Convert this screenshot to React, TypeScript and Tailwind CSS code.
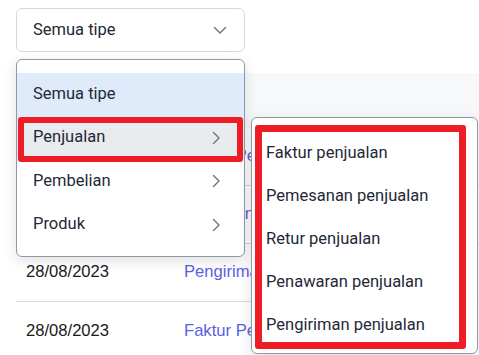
import React from "react";

const Chevron = ({ dir }: { dir: "down" | "right" }) => (
  <svg width="16" height="16" viewBox="0 0 16 16" fill="none" stroke="#6b7280" strokeWidth="1.4" strokeLinecap="round" strokeLinejoin="round">
    {dir === "down" ? <path d="M2.5 5.5l5.5 5.5 5.5-5.5" /> : <path d="M5.5 2.5l5.5 5.5-5.5 5.5" />}
  </svg>
);

const rows = [
  { date: "28/08/2023", link: "Faktur Penjualan" },
  { date: "28/08/2023", link: "Pemesanan Penjualan" },
  { date: "28/08/2023", link: "Pengiriman Penjualan" },
  { date: "28/08/2023", link: "Faktur Penjualan" },
];

const subItems = ["Faktur penjualan", "Pemesanan penjualan", "Retur penjualan", "Penawaran penjualan", "Pengiriman penjualan"];

export default function App() {
  return (
    <div className="relative w-[479px] h-[355px] overflow-hidden bg-white" style={{ fontFamily: "Roboto, 'Liberation Sans', sans-serif" }}>
      <div className="pl-4 pt-2">
        <div className="flex h-[44px] w-[229px] items-center justify-between rounded-md border border-[#d4d8de] pl-4 pr-[16px] text-[16.5px] text-[#1f2937]">
          <span>Semua tipe</span>
          <Chevron dir="down" />
        </div>
        <div className="mt-[21px] font-['Liberation_Sans',Arial,sans-serif] text-[16.6px]">
          <div className="h-[55px] bg-[#f7f8fa]" />
          {rows.map((r, i) => (
            <div key={i} className={`flex h-[58px] items-center ${i < rows.length - 1 ? "border-b border-[#d5dae1]" : ""}`}>
              <span className="w-[168px] pl-[10px] text-[#1a1a1a]">{r.date}</span>
              <span className="whitespace-nowrap text-[#5b5fe3]">{r.link}</span>
            </div>
          ))}
        </div>
      </div>

      {/* Dropdown menu */}
      <div className="absolute left-4 top-[59px] w-[229px] rounded-md border border-[#8f98a8] bg-white pt-[13px] pb-[10px] text-[16.5px] text-[#1f2937] shadow-[0_4px_14px_rgba(0,0,0,0.12)]">
        <div className="flex h-[43px] items-center bg-[#dfeafb] px-4">Semua tipe</div>
        <div className="relative flex h-[43px] items-center justify-between bg-[#e9ecef] pl-4 pr-5">
          <span>Penjualan</span>
          <Chevron dir="right" />
          <div className="absolute left-[1px] right-[1px] top-[1px] bottom-[-3px] rounded-[3px] border-[6px] border-[#ee1c25]" />
        </div>
        <div className="flex h-[44px] items-center justify-between pl-4 pr-5">
          <span>Pembelian</span>
          <Chevron dir="right" />
        </div>
        <div className="flex h-[43px] items-center justify-between pl-4 pr-5">
          <span>Produk</span>
          <Chevron dir="right" />
        </div>
      </div>

      {/* Submenu */}
      <div className="absolute left-[251px] top-[117px] h-[237px] w-[227px] rounded-md border border-[#8f98a8] bg-white text-[16.5px] text-[#1f2937] shadow-[0_4px_14px_rgba(0,0,0,0.12)]">
        <div className="relative pt-[14px]">
          {subItems.map((s) => (
            <div key={s} className="flex h-[43px] items-center pl-[14px]">{s}</div>
          ))}
          <div className="pointer-events-none absolute left-[3px] top-[7px] h-[224px] w-[211px] rounded-[3px] border-[7px] border-[#ee1c25]" />
        </div>
      </div>
    </div>
  );
}
